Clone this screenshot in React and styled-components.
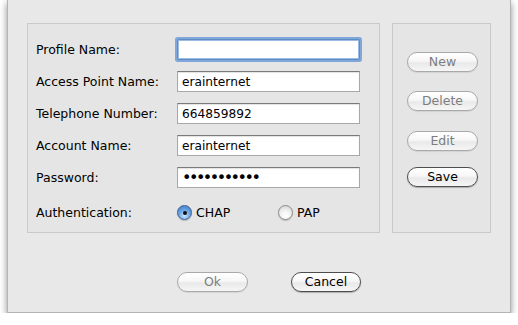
import React from "react";
import styled, { createGlobalStyle } from "styled-components";

const Global = createGlobalStyle`
  html, body { margin: 0; padding: 0; background: #ffffff; }
  body { font-family: "DejaVu Sans", "Liberation Sans", sans-serif; font-size: 12.5px; color: #000; }
`;

const Window = styled.div`
  box-sizing: border-box;
  width: 504px;
  height: 313px;
  margin-left: 7px;
  background: #e8e8e8;
  border: 1px solid #b4b4b4;
  border-top: none;
  box-shadow: 0 3px 7px rgba(0, 0, 0, 0.45);
  padding: 23px 19px 0 19px;
  display: flex;
  flex-direction: column;
`;

const Panels = styled.div`
  display: flex;
  gap: 12px;
  height: 210px;
`;

const GroupBox = styled.div`
  box-sizing: border-box;
  width: ${(p) => p.$w}px;
  height: 100%;
  border: 1px solid #c9c9c9;
  background: #e5e5e5;
`;

const FormBox = styled(GroupBox)`
  padding: 15px 0 0 8px;
  display: grid;
  grid-template-columns: 141px 183px;
  grid-auto-rows: 21px;
  row-gap: 11px;
  align-content: start;
`;

const Label = styled.div`
  display: flex;
  align-items: center;
  height: 100%;
  margin-top: ${(p) => p.$shift || 0}px;
  white-space: nowrap;
`;

const Field = styled.div`
  box-sizing: border-box;
  height: 21px;
  background: #fff;
  border: 1px solid #a8a8a8;
  border-top-color: #7a7a7a;
  box-shadow: inset 0 1px 1px rgba(0, 0, 0, 0.12);
  padding: 0 4px;
  display: flex;
  align-items: center;
  font-size: ${(p) => (p.$secret ? "16px" : "12.2px")};
  letter-spacing: ${(p) => (p.$secret ? "-2.5px" : "0")};
  ${(p) =>
    p.$focused &&
    `
    border: 1px solid #5e8cc6;
    box-shadow: 0 0 0 2px #7fa7d9, inset 0 0 0 1px #9dbbe2;
    border-radius: 1px;
  `}
`;

const RadioRow = styled.div`
  display: flex;
  align-items: center;
  margin-top: ${(p) => p.$shift || 0}px;
  height: 100%;
`;

const RadioOption = styled.label`
  display: flex;
  align-items: center;
  gap: 4px;
  width: ${(p) => p.$w}px;
`;

const RadioDot = styled.span`
  box-sizing: border-box;
  width: 15px;
  height: 15px;
  border-radius: 50%;
  position: relative;
  border: 1px solid ${(p) => (p.$on ? "#3a5f8f" : "#8a8a8a")};
  background: ${(p) =>
    p.$on
      ? "radial-gradient(circle at 50% 75%, #cfe6fb 0%, #6fa8e6 45%, #3d78c4 100%)"
      : "radial-gradient(circle at 50% 75%, #ffffff 0%, #f1f1f1 45%, #cfcfcf 100%)"};
  box-shadow: 0 1px 1px rgba(0, 0, 0, 0.2);
  &::after {
    content: "";
    display: ${(p) => (p.$on ? "block" : "none")};
    position: absolute;
    left: 4.5px;
    top: 4.5px;
    width: 4px;
    height: 4px;
    border-radius: 50%;
    background: #111;
  }
`;

const ButtonColumn = styled(GroupBox)`
  display: flex;
  flex-direction: column;
  align-items: center;
  padding-top: 28px;
  padding-left: 2px;
`;

const AquaButton = styled.button`
  box-sizing: border-box;
  width: ${(p) => p.$w || 71}px;
  height: 20px;
  margin-top: ${(p) => p.$top || 0}px;
  border-radius: 10px;
  border: 1px solid ${(p) => (p.disabled ? "#a9a9a9" : "#4e4e4e")};
  background: linear-gradient(#ffffff 0%, #f7f7f7 45%, #e9e9e9 55%, #f6f6f6 100%);
  box-shadow: 0 1px 1px rgba(0, 0, 0, ${(p) => (p.disabled ? 0.08 : 0.25)});
  font-family: "DejaVu Sans", "Liberation Sans", sans-serif;
  font-size: 12.5px;
  color: ${(p) => (p.disabled ? "#7d7d7d" : "#000")};
  padding: 0;
  line-height: 18px;
`;

const Footer = styled.div`
  display: flex;
  gap: 43px;
  padding-left: 150px;
  margin-top: 39px;
`;

export default function App() {
  const rows = [
    ["Profile Name:", "", { $focused: true }],
    ["Access Point Name:", "erainternet", {}],
    ["Telephone Number:", "664859892", {}],
    ["Account Name:", "erainternet", {}],
    ["Password:", "•••••••••••", { $secret: true }],
  ];
  return (
    <>
      <Global />
      <Window>
        <Panels>
          <FormBox $w={353}>
            {rows.map(([label, value, props]) => (
              <React.Fragment key={label}>
                <Label>{label}</Label>
                <Field {...props}>{value}</Field>
              </React.Fragment>
            ))}
            <Label $shift={3}>Authentication:</Label>
            <RadioRow $shift={3}>
              <RadioOption $w={101}>
                <RadioDot $on />
                CHAP
              </RadioOption>
              <RadioOption>
                <RadioDot />
                PAP
              </RadioOption>
            </RadioRow>
          </FormBox>
          <ButtonColumn $w={99}>
            <AquaButton disabled>New</AquaButton>
            <AquaButton disabled $top={19}>Delete</AquaButton>
            <AquaButton disabled $top={20}>Edit</AquaButton>
            <AquaButton $top={16}>Save</AquaButton>
          </ButtonColumn>
        </Panels>
        <Footer>
          <AquaButton disabled>Ok</AquaButton>
          <AquaButton $w={70}>Cancel</AquaButton>
        </Footer>
      </Window>
    </>
  );
}
